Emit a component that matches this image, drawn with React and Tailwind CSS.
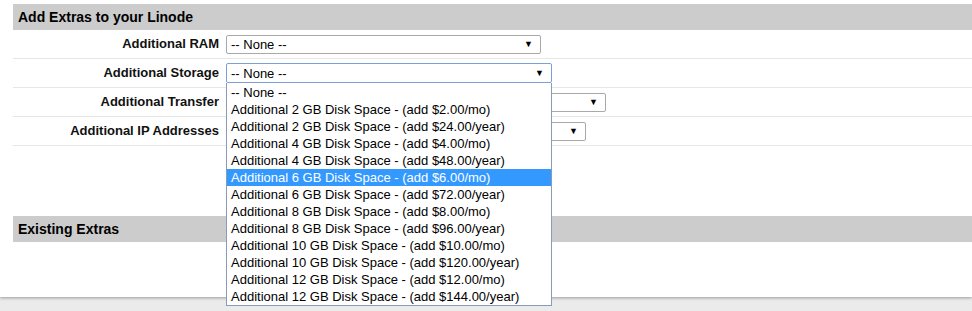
import React from 'react';

const storageOptions = [
  '-- None --',
  'Additional 2 GB Disk Space - (add $2.00/mo)',
  'Additional 2 GB Disk Space - (add $24.00/year)',
  'Additional 4 GB Disk Space - (add $4.00/mo)',
  'Additional 4 GB Disk Space - (add $48.00/year)',
  'Additional 6 GB Disk Space - (add $6.00/mo)',
  'Additional 6 GB Disk Space - (add $72.00/year)',
  'Additional 8 GB Disk Space - (add $8.00/mo)',
  'Additional 8 GB Disk Space - (add $96.00/year)',
  'Additional 10 GB Disk Space - (add $10.00/mo)',
  'Additional 10 GB Disk Space - (add $120.00/year)',
  'Additional 12 GB Disk Space - (add $12.00/mo)',
  'Additional 12 GB Disk Space - (add $144.00/year)',
];

const SelectBox = ({ width, focused }) => (
  <div
    className={`flex items-center justify-between bg-white rounded-[2px] border pl-[4px] pr-[7px] ${
      focused ? 'h-[20px] border-[#7b9fd6]' : 'h-[19px] border-[#a9a9a9]'
    }`}
    style={{ width }}
  >
    <span className="text-[13px] leading-none text-black">-- None --</span>
    <span className="text-[9px] leading-none text-black">▼</span>
  </div>
);

const Row = ({ label, children }) => (
  <div className="flex items-center h-[29px] border-b border-[#e6e6e6]">
    <div className="w-[206px] text-right text-[13px] font-bold text-[#111]">{label}</div>
    <div className="ml-[7px] relative">{children}</div>
  </div>
);

const App = () => {
  return (
    <div className="h-[311px] w-[972px] overflow-hidden bg-[#ebebeb]" style={{ fontFamily: '"Liberation Sans", Arial, sans-serif' }}>
      <div className="h-[297px] bg-white pl-[13px] pt-[4px] shadow-[0_1px_3px_rgba(0,0,0,0.35)] relative">
        <div className="h-[26px] bg-[#cccccc] flex items-center pl-[5px] text-[14px] font-bold text-black">
          Add Extras to your Linode
        </div>

        <Row label="Additional RAM">
          <SelectBox width={315} />
        </Row>
        <Row label="Additional Storage">
          <SelectBox width={326} focused />
          <ul className="absolute left-0 top-[20px] z-10 w-[326px] bg-white border border-[#8a9bb8] border-t-0 pt-px">
            {storageOptions.map((opt, i) => (
              <li
                key={opt}
                className={`h-[17px] pl-[4px] text-[13px] leading-[17px] whitespace-nowrap ${
                  i === 5 ? 'bg-[#3399ff] text-white' : 'text-black'
                }`}
              >
                {opt}
              </li>
            ))}
          </ul>
        </Row>
        <Row label="Additional Transfer">
          <SelectBox width={380} />
        </Row>
        <Row label="Additional IP Addresses">
          <SelectBox width={360} />
        </Row>

        <div className="h-[70px]" />

        <div className="h-[26px] bg-[#cccccc] flex items-center pl-[5px] text-[14px] font-bold text-black">
          Existing Extras
        </div>
      </div>
    </div>
  );
};

export default App;
